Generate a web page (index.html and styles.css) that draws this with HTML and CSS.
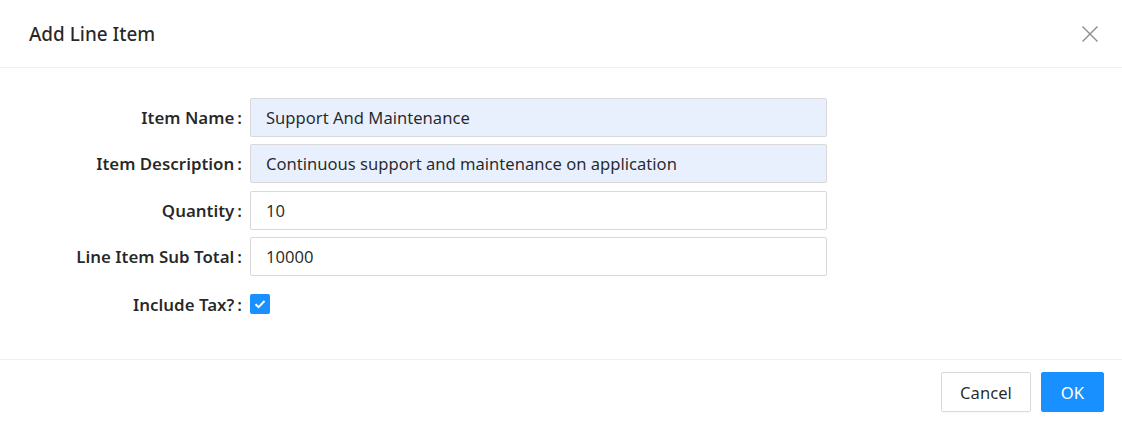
FILE: index.html
```html
<!DOCTYPE html>
<html>
<head>
<meta charset="utf-8">
<link rel="stylesheet" href="styles.css">
</head>
<body>
<div class="modal">
  <div class="modal-header">
    <div class="modal-title">Add Line Item</div>
    <button class="modal-close" aria-label="Close">
      <svg width="16" height="16" viewBox="0 0 16 16"><path d="M0.5 0.5L15.5 15.5M15.5 0.5L0.5 15.5" stroke="#8c8c8c" stroke-width="1.4" fill="none"/></svg>
    </button>
  </div>
  <div class="modal-body">
    <div class="form-row">
      <label class="form-label">Item Name<span class="colon">:</span></label>
      <div class="form-control"><div class="input autofill">Support And Maintenance</div></div>
    </div>
    <div class="form-row">
      <label class="form-label">Item Description<span class="colon">:</span></label>
      <div class="form-control"><div class="input autofill">Continuous support and maintenance on application</div></div>
    </div>
    <div class="form-row">
      <label class="form-label">Quantity<span class="colon">:</span></label>
      <div class="form-control"><div class="input">10</div></div>
    </div>
    <div class="form-row">
      <label class="form-label">Line Item Sub Total<span class="colon">:</span></label>
      <div class="form-control"><div class="input">10000</div></div>
    </div>
    <div class="form-row check-row">
      <label class="form-label">Include Tax?<span class="colon">:</span></label>
      <div class="form-control">
        <span class="checkbox"><svg width="20" height="20" viewBox="0 0 20 20"><path d="M5.5 10.2L8.6 13.2L14.5 7" stroke="#fff" stroke-width="2" fill="none"/></svg></span>
      </div>
    </div>
  </div>
  <div class="modal-footer">
    <button class="btn">Cancel</button>
    <button class="btn btn-primary">OK</button>
  </div>
</div>
</body>
</html>
```

FILE: styles.css
```css
html, body {
  margin: 0;
  padding: 0;
  background: #fff;
}
body {
  font-family: "Noto Sans", "Open Sans", sans-serif;
  color: rgba(0,0,0,0.85);
  width: 1122px;
  height: 421px;
  overflow: hidden;
}
.modal {
  width: 1122px;
}
.modal-header {
  height: 68px;
  border-bottom: 1px solid #f0f0f0;
  display: flex;
  align-items: center;
  justify-content: space-between;
  padding: 0 24px 0 29px;
  box-sizing: border-box;
}
.modal-title {
  font-size: 18.9px;
  font-weight: 500;
  color: rgba(0,0,0,0.85);
}
.modal-close {
  border: 0;
  background: none;
  padding: 0;
  width: 16px;
  height: 16px;
  display: flex;
}
.modal-body {
  padding: 30px 0 0 0;
  display: flex;
  flex-direction: column;
  gap: 7.3px;
  height: 291px;
  box-sizing: border-box;
}
.form-row {
  display: flex;
  align-items: center;
  height: 39px;
}
.check-row {
  height: 42px;
}
.form-label {
  width: 242px;
  text-align: right;
  font-size: 16.9px;
  font-weight: 600;
  color: rgba(0,0,0,0.85);
  flex: none;
  white-space: nowrap;
}
.colon {
  margin: 0 0 0 3px;
}
.form-control {
  margin-left: 8px;
  width: 577px;
  display: flex;
  align-items: center;
}
.input {
  width: 100%;
  height: 39px;
  box-sizing: border-box;
  border: 1px solid #d9d9d9;
  border-radius: 2px;
  padding: 0 15px;
  display: flex;
  align-items: center;
  font-size: 16.6px;
  color: rgba(0,0,0,0.85);
  background: #fff;
}
.input.autofill {
  background: #e8f0fe;
}
.checkbox {
  width: 20px;
  height: 20px;
  background: #1890ff;
  border-radius: 2px;
  display: flex;
}
.modal-footer {
  border-top: 1px solid #f0f0f0;
  height: 64px;
  display: flex;
  align-items: center;
  justify-content: flex-end;
  gap: 10px;
  padding: 0 18px 0 0;
}
.btn {
  height: 40px;
  padding: 0 18px;
  border: 1px solid #d9d9d9;
  border-radius: 2px;
  background: #fff;
  font-family: inherit;
  font-size: 16.6px;
  color: rgba(0,0,0,0.85);
  box-shadow: 0 2px 0 rgba(0,0,0,0.015);
}
.btn-primary {
  background: #1890ff;
  border-color: #1890ff;
  color: #fff;
  padding: 0 19px;
}
```
